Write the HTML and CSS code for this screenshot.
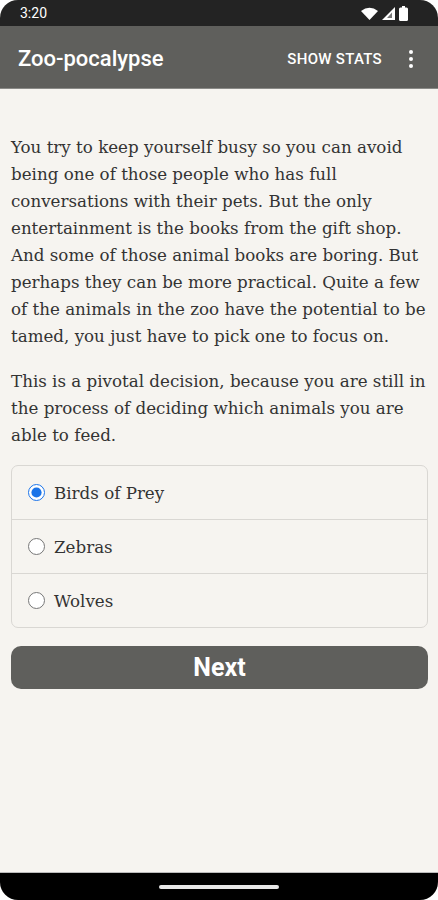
FILE: index.html
```html
<!DOCTYPE html>
<html lang="en">
<head>
    <meta charset="UTF-8">
    <meta name="viewport" content="width=device-width, initial-scale=1.0">
    <title>Zoo-pocalypse</title>
    <link rel="stylesheet" href="styles.css">
</head>
<body>
    <div class="screen">
        <div class="status-bar">
            <span class="clock">3:20</span>
            <div class="status-icons">
                <svg width="17" height="13" viewBox="0 0 17 13"><path d="M0 4 Q8.5 -2.5 17 4 L8.5 13 Z" fill="#fff"/></svg>
                <svg width="13" height="13" viewBox="0 0 13 13"><path d="M13 0 L13 13 L0 13 Z" fill="#fff"/><path d="M10 5.5 L10 11 L5 11 Z" fill="#777"/></svg>
                <svg width="9" height="15" viewBox="0 0 9 15"><rect x="3" y="0" width="3" height="2" fill="#fff"/><rect x="0" y="1.5" width="9" height="13.5" rx="1.5" fill="#fff"/></svg>
            </div>
        </div>
        <header class="app-bar">
            <h1 class="title">Zoo-pocalypse</h1>
            <button class="stats-btn">SHOW STATS</button>
            <button class="menu-btn" aria-label="More options">
                <svg width="6" height="20" viewBox="0 0 6 20"><circle cx="3" cy="3" r="2" fill="#fff"/><circle cx="3" cy="10" r="2" fill="#fff"/><circle cx="3" cy="17" r="2" fill="#fff"/></svg>
            </button>
        </header>

        <main class="content">
            <p>You try to keep yourself busy so you can avoid being one of those people who has full conversations with their pets. But the only entertainment is the books from the gift shop. And some of those animal books are boring. But perhaps they can be more practical. Quite a few of the animals in the zoo have the potential to be tamed, you just have to pick one to focus on.</p>
            <p>This is a pivotal decision, because you are still in the process of deciding which animals you are able to feed.</p>

            <form class="choices" onsubmit="event.preventDefault()">
                <div class="choice-list">
                    <label class="choice"><input type="radio" name="choice" checked> Birds of Prey</label>
                    <label class="choice"><input type="radio" name="choice"> Zebras</label>
                    <label class="choice"><input type="radio" name="choice"> Wolves</label>
                </div>
                <button type="submit" class="next-btn">Next</button>
            </form>
        </main>

        <div class="nav-bar">
            <div class="handle"></div>
        </div>
    </div>
</body>
</html>
```

FILE: styles.css
```css
/* General Styles */
html, body {
    margin: 0;
    padding: 0;
    height: 100%;
    background: #fff;
}

.screen {
    height: 900px;
    display: flex;
    flex-direction: column;
    background: #f6f4f0;
    border-radius: 18px;
    overflow: hidden;
}

.status-bar {
    height: 26px;
    background: #232323;
    color: #fff;
    display: flex;
    align-items: center;
    justify-content: space-between;
    padding: 0 30px 0 20px;
    font-family: Roboto, sans-serif;
    font-size: 14px;
}

.status-icons {
    display: flex;
    align-items: center;
    gap: 4px;
}

.app-bar {
    height: 59px;
    background: #5f5f5c;
    display: flex;
    align-items: center;
    padding: 3px 24px 0 18px;
    border-bottom: 1px solid #8a8a87;
    font-family: Roboto, sans-serif;
    color: #fff;
}

.title {
    margin: 0;
    font-size: 22px;
    font-weight: 500;
    flex: 1;
}

.stats-btn {
    background: none;
    border: none;
    color: #fff;
    font-family: Roboto, sans-serif;
    font-size: 15px;
    font-weight: 500;
    letter-spacing: 0.3px;
    padding: 0;
    margin-right: 26px;
}

.menu-btn {
    background: none;
    border: none;
    padding: 0;
    display: flex;
}

.content {
    flex: 1;
    padding: 45px 10px 0 11px;
    font-family: "DejaVu Serif", serif;
    color: #333;
}

.content p {
    margin: 0 0 18px;
    font-size: 16.7px;
    line-height: 27px;
}

.choice-list {
    border: 1px solid #d9d7d3;
    border-radius: 7px;
    margin-top: -2px;
}

.choice {
    display: flex;
    align-items: center;
    height: 53px;
    padding-left: 16px;
    font-size: 16.7px;
    color: #333;
    border-top: 1px solid #d9d7d3;
}

.choice:first-child {
    border-top: none;
}

.choice input {
    width: 17px;
    height: 17px;
    margin: 0 9px 0 0;
    accent-color: #1a73e8;
}

.next-btn {
    width: 100%;
    height: 43px;
    margin-top: 18px;
    background: #5f5f5c;
    color: #fff;
    border: none;
    border-radius: 10px;
    font-family: Roboto, sans-serif;
    font-size: 25px;
    font-weight: 700;
}

.nav-bar {
    height: 27px;
    background: #000;
    border-top: 1px solid #bbb;
    display: flex;
    justify-content: center;
    align-items: center;
}

.handle {
    width: 120px;
    height: 4px;
    border-radius: 2px;
    background: #e8e8e8;
}
```
